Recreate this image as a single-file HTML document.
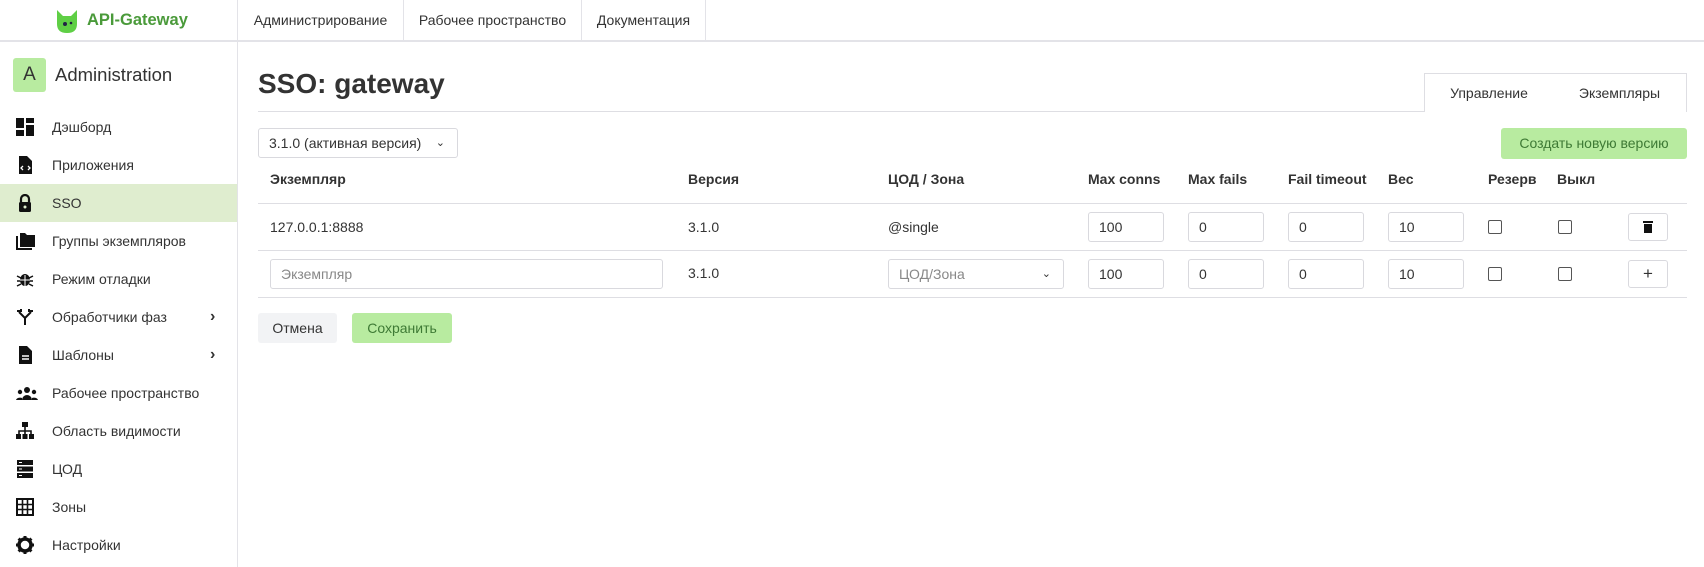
<!DOCTYPE html>
<html><head><meta charset="utf-8"><style>
*{box-sizing:border-box;margin:0;padding:0}
body{width:1704px;height:567px;overflow:hidden;background:#fff;font-family:"Liberation Sans",sans-serif;color:#333;font-size:14px;position:relative}
.a{position:absolute}
.top{left:0;top:0;width:1704px;height:42px;border-bottom:2px solid #e3e3e8}
.nav{top:0;height:41px;line-height:41px;font-size:14px;color:#333;border-right:1px solid #e3e3e8;text-align:center}
.side{left:0;top:42px;width:238px;height:525px;border-right:1px solid #e3e3e8}
.mi{left:0;width:237px;height:38px;line-height:38px;font-size:14px}
.mi span{position:absolute;left:52px}
.mi svg{position:absolute;left:16px;top:10px}
.mi .ch{position:absolute;left:210px;top:0;font-size:16px;font-weight:bold}
.th{top:171px;font-weight:bold;font-size:14px;color:#333}
.hl{left:258px;width:1429px;height:1px;background:#dedee3}
.inp{height:30px;border:1px solid #d9d9de;border-radius:3px;line-height:29px;padding-left:10px;font-size:14px;background:#fff}
.cb{width:14px;height:14px;border:1.5px solid #555;border-radius:2px}
.btn{border:1px solid #d9d9de;border-radius:3px;width:40px;height:28px;text-align:center;line-height:26px}
.td{font-size:14px}
</style></head><body>
<div class="a top"></div>
<svg class="a" style="left:54px;top:8px" width="26" height="26" viewBox="0 0 26 26"><path d="M3 2 L9 8 L17 8 L23 2 L23 16 Q23 25 13 25 Q3 25 3 16 Z" fill="#5fcf45"/><circle cx="11" cy="16" r="2" fill="#224"/><circle cx="17" cy="15" r="1.3" fill="#224"/></svg>
<div class="a" style="left:87px;top:11px;font-size:16.5px;font-weight:bold;color:#4a9a3a">API-Gateway</div>
<div class="a" style="left:237px;top:0;width:1px;height:42px;background:#e3e3e8"></div>
<div class="a nav" style="left:238px;width:166px">Администрирование</div>
<div class="a nav" style="left:404px;width:178px">Рабочее пространство</div>
<div class="a nav" style="left:582px;width:124px">Документация</div>

<div class="a side"></div>
<div class="a" style="left:13px;top:58px;width:33px;height:34px;background:#b8eba0;border-radius:3px;text-align:center;line-height:34px;font-size:19px;color:#333">A</div>
<div class="a" style="left:55px;top:64px;font-size:18.5px;color:#333">Administration</div>

<div class="a mi" style="top:108px"><svg width="18" height="18" viewBox="0 0 18 18"><rect x="0" y="0" width="8" height="10" fill="#111"/><rect x="10" y="0" width="8" height="5" fill="#111"/><rect x="0" y="12" width="8" height="6" fill="#111"/><rect x="10" y="7" width="8" height="11" fill="#111"/></svg><span>Дэшборд</span></div>
<div class="a mi" style="top:146px"><svg width="18" height="18" viewBox="0 0 18 18"><path d="M3 0h8l5 5v13H3z" fill="#111"/><path d="M7 10l-2 2 2 2M12 10l2 2-2 2" stroke="#fff" fill="none" stroke-width="1.3"/></svg><span>Приложения</span></div>
<div class="a mi" style="top:184px;background:#dfedcf"><svg width="18" height="18" viewBox="0 0 18 18"><path d="M5 8V5a4 4 0 0 1 8 0v3" stroke="#111" stroke-width="2.2" fill="none"/><rect x="3" y="8" width="12" height="10" rx="1.5" fill="#111"/><circle cx="9" cy="13" r="1.5" fill="#dfedcf"/></svg><span>SSO</span></div>
<div class="a mi" style="top:222px"><svg width="20" height="18" viewBox="0 0 20 18"><path d="M0 4v14h16v-2H2V4z" fill="#111"/><path d="M4 1h5l2 2h8v12H4z" fill="#111"/></svg><span>Группы экземпляров</span></div>
<div class="a mi" style="top:260px"><svg width="18" height="18" viewBox="0 0 18 18"><ellipse cx="9" cy="10" rx="5" ry="6" fill="#111"/><path d="M1 6l4 2M17 6l-4 2M1 11h4M17 11h-4M1 16l4-2M17 16l-4-2" stroke="#111" stroke-width="1.5"/><path d="M4 10h10M9 5v11" stroke="#fff" stroke-width="1"/></svg><span>Режим отладки</span></div>
<div class="a mi" style="top:298px"><svg width="18" height="18" viewBox="0 0 18 18"><path d="M9 17V10L3 4M9 10l6-6M1 3h4V1M17 3h-4V1" stroke="#111" stroke-width="2" fill="none"/></svg><span>Обработчики фаз</span><b class="ch">›</b></div>
<div class="a mi" style="top:336px"><svg width="18" height="18" viewBox="0 0 18 18"><path d="M3 0h8l5 5v13H3z" fill="#111"/><path d="M6 10h7M6 13h7" stroke="#fff" stroke-width="1.5"/></svg><span>Шаблоны</span><b class="ch">›</b></div>
<div class="a mi" style="top:374px"><svg width="22" height="18" viewBox="0 0 22 18"><circle cx="11" cy="6" r="3" fill="#111"/><circle cx="4" cy="8" r="2.2" fill="#111"/><circle cx="18" cy="8" r="2.2" fill="#111"/><path d="M6 16a5 5 0 0 1 10 0zM0 16a4 3 0 0 1 6-2v2zM22 16a4 3 0 0 0-6-2v2z" fill="#111"/></svg><span>Рабочее пространство</span></div>
<div class="a mi" style="top:412px"><svg width="18" height="18" viewBox="0 0 18 18"><rect x="6" y="0" width="6" height="5" fill="#111"/><path d="M9 5v4M3 12V9h12v3M9 9v3" stroke="#111" stroke-width="1.6" fill="none"/><rect x="0" y="12" width="5" height="5" fill="#111"/><rect x="6.5" y="12" width="5" height="5" fill="#111"/><rect x="13" y="12" width="5" height="5" fill="#111"/></svg><span>Область видимости</span></div>
<div class="a mi" style="top:450px"><svg width="18" height="18" viewBox="0 0 18 18"><rect x="1" y="0" width="16" height="5" fill="#111"/><rect x="1" y="6.5" width="16" height="5" fill="#111"/><rect x="1" y="13" width="16" height="5" fill="#111"/><path d="M3 2.5h3M3 9h3M3 15.5h3" stroke="#fff"/></svg><span>ЦОД</span></div>
<div class="a mi" style="top:488px"><svg width="18" height="18" viewBox="0 0 18 18"><rect x="1" y="1" width="16" height="16" fill="none" stroke="#111" stroke-width="2"/><path d="M6.5 1v16M11.5 1v16M1 6.5h16M1 11.5h16" stroke="#111" stroke-width="1.6"/></svg><span>Зоны</span></div>
<div class="a mi" style="top:526px"><svg width="18" height="18" viewBox="0 0 18 18"><circle cx="9" cy="9" r="6" fill="none" stroke="#111" stroke-width="3.5"/><path d="M9 0v4M9 14v4M0 9h4M14 9h4M2.6 2.6l2.8 2.8M12.6 12.6l2.8 2.8M2.6 15.4l2.8-2.8M12.6 5.4l2.8-2.8" stroke="#111" stroke-width="3"/></svg><span>Настройки</span></div>

<div class="a" style="left:258px;top:68px;font-size:28px;font-weight:bold;color:#333">SSO: gateway</div>
<div class="a hl" style="top:111px"></div>
<div class="a" style="left:1424px;top:73px;width:130px;height:39px;border:1px solid #dedee3;border-bottom:none;text-align:center;line-height:38px;background:#fff">Управление</div>
<div class="a" style="left:1553px;top:73px;width:134px;height:39px;border:1px solid #dedee3;border-bottom:none;border-left:none;text-align:center;line-height:38px;background:#fff">Экземпляры</div>

<div class="a inp" style="left:258px;top:128px;width:200px;height:30px">3.1.0 (активная версия)<span style="position:absolute;right:12px;font-size:11px">⌄</span></div>
<div class="a" style="left:1501px;top:128px;width:186px;height:31px;background:#b8eba0;border-radius:3px;text-align:center;line-height:31px;color:#3e7a35">Создать новую версию</div>

<div class="a th" style="left:270px">Экземпляр</div>
<div class="a th" style="left:688px">Версия</div>
<div class="a th" style="left:888px">ЦОД / Зона</div>
<div class="a th" style="left:1088px">Max conns</div>
<div class="a th" style="left:1188px">Max fails</div>
<div class="a th" style="left:1288px">Fail timeout</div>
<div class="a th" style="left:1388px">Вес</div>
<div class="a th" style="left:1488px">Резерв</div>
<div class="a th" style="left:1557px">Выкл</div>
<div class="a hl" style="top:203px"></div>

<div class="a td" style="left:270px;top:219px">127.0.0.1:8888</div>
<div class="a td" style="left:688px;top:219px">3.1.0</div>
<div class="a td" style="left:888px;top:219px">@single</div>
<div class="a inp" style="left:1088px;top:212px;width:76px">100</div>
<div class="a inp" style="left:1188px;top:212px;width:76px">0</div>
<div class="a inp" style="left:1288px;top:212px;width:76px">0</div>
<div class="a inp" style="left:1388px;top:212px;width:76px">10</div>
<div class="a cb" style="left:1488px;top:220px"></div>
<div class="a cb" style="left:1558px;top:220px"></div>
<div class="a btn" style="left:1628px;top:213px"><svg width="10" height="12" viewBox="0 0 10 12" style="margin-top:7px"><rect x="0" y="0" width="10" height="2" fill="#111"/><rect x="1" y="3" width="8" height="9" fill="#111"/></svg></div>
<div class="a hl" style="top:250px"></div>

<div class="a inp" style="left:270px;top:259px;width:393px;color:#888">Экземпляр</div>
<div class="a td" style="left:688px;top:265px">3.1.0</div>
<div class="a inp" style="left:888px;top:259px;width:176px;color:#888">ЦОД/Зона<span style="position:absolute;right:12px;font-size:11px;color:#333">⌄</span></div>
<div class="a inp" style="left:1088px;top:259px;width:76px">100</div>
<div class="a inp" style="left:1188px;top:259px;width:76px">0</div>
<div class="a inp" style="left:1288px;top:259px;width:76px">0</div>
<div class="a inp" style="left:1388px;top:259px;width:76px">10</div>
<div class="a cb" style="left:1488px;top:267px"></div>
<div class="a cb" style="left:1558px;top:267px"></div>
<div class="a btn" style="left:1628px;top:260px;font-size:17px">+</div>
<div class="a hl" style="top:297px"></div>

<div class="a" style="left:258px;top:313px;width:79px;height:30px;background:#f2f3f5;border-radius:3px;text-align:center;line-height:30px">Отмена</div>
<div class="a" style="left:352px;top:313px;width:100px;height:30px;background:#b8eba0;border-radius:3px;text-align:center;line-height:30px;color:#3e7a35">Сохранить</div>
</body></html>
